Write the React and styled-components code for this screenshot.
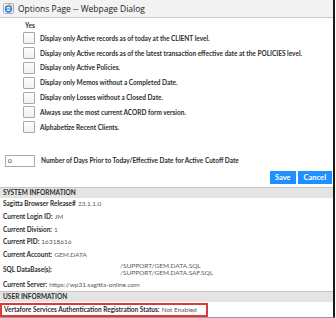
import React from "react";
import styled, { createGlobalStyle } from "styled-components";

const GlobalStyle = createGlobalStyle`
    body {
        margin: 0;
        background: #ffffff;
        font-family: "Lato", "Open Sans", sans-serif;
    }
`;

//Dialog frame
const Window = styled.div`
    width: 333px;
    height: 317px;
    display: flex;
    flex-direction: column;
    border-right: 2px solid #1a1a1a;
    border-bottom: 1px solid #9a9a9a;
    overflow: hidden;
    background: #ffffff;
`;

const TitleBar = styled.div`
    height: 17px;
    flex-shrink: 0;
    display: flex;
    align-items: center;
    gap: 4px;
    padding-left: 3px;
    background: #f3f3f3;
    border-bottom: 1px solid #c9c9c9;
`;

const TitleText = styled.span`
    font-family: "Open Sans", sans-serif;
    font-size: 8.5px;
    color: #222;
`;

const Options = styled.div`
    padding: 2px 0 0 23px;
`;

const YesLabel = styled.div`
    height: 11px;
    line-height: 11px;
    padding-left: 2px;
    font-size: 6.5px;
    font-weight: 700;
    color: #333;
`;

const CheckRow = styled.label`
    height: 14.8px;
    display: flex;
    align-items: center;
    gap: 5px;
    font-size: 6.5px;
    font-weight: 700;
    color: #2e2e2e;
`;

const Box = styled.span`
    width: 10px;
    height: 10px;
    flex-shrink: 0;
    border: 1px solid #a8a8a8;
    border-radius: 1px;
    background: linear-gradient(#fdfdfd, #f1f1f1);
`;

const CutoffRow = styled.div`
    margin-top: 20px;
    padding-left: 5px;
    display: flex;
    align-items: center;
    gap: 6px;
    font-size: 6.5px;
    font-weight: 700;
    color: #2e2e2e;
`;

const DaysInput = styled.div`
    width: 26px;
    height: 10px;
    border: 1px solid #a9a9a9;
    font-size: 6.5px;
    font-weight: 400;
    line-height: 10px;
    padding-left: 2px;
    color: #333;
`;

const ButtonRow = styled.div`
    display: flex;
    justify-content: flex-end;
    gap: 2px;
    padding: 4px 1px 3px 0;
`;

const Button = styled.button`
    height: 13px;
    padding: 0 ${(p) => p.$pad}px;
    border: none;
    background: #1e90ff;
    color: #ffffff;
    font-family: "Lato", sans-serif;
    font-size: 7.5px;
    font-weight: 700;
    line-height: 13px;
`;

const SectionHeader = styled.div`
    height: 10px;
    line-height: 10px;
    padding-left: 3px;
    background: #e4e4e4;
    border-top: 1px solid #c4c4c4;
    font-size: 6.5px;
    font-weight: 700;
    color: #2e2e2e;
`;

const InfoRow = styled.div`
    height: ${(p) => p.$h || 13.5}px;
    display: flex;
    align-items: center;
    padding-left: 3px;
    font-size: 6.5px;
    color: #2e2e2e;
    white-space: nowrap;
`;

const Key = styled.span`
    font-weight: 700;
    margin-right: 2px;
`;

const Value = styled.span`
    color: #5a5a5a;
`;

const SqlKey = styled.span`
    width: 117px;
    font-weight: 700;
`;

const Paths = styled.div`
    display: flex;
    flex-direction: column;
    line-height: 7.5px;
    color: #5a5a5a;
`;

const StatusBox = styled.div`
    margin: 1px 0 0 0;
    width: 202px;
    height: 11px;
    display: flex;
    align-items: center;
    padding-left: 2px;
    border: 2px solid #e0383a;
    font-size: 6.5px;
    color: #2e2e2e;
    white-space: nowrap;
`;

const IEIcon = () => (
    <svg width="11" height="11" viewBox="0 0 11 11">
        <rect x="0.5" y="0.5" width="10" height="10" rx="1" fill="#f4f7fb" stroke="#9bb0c8" />
        <circle cx="5.5" cy="6" r="3" fill="none" stroke="#2a78d0" strokeWidth="1.4" />
        <path d="M3 6 H8" stroke="#2a78d0" strokeWidth="1" />
        <path d="M2 3.5 Q6 0.5 9.5 2.5" fill="none" stroke="#e8a620" strokeWidth="0.9" />
    </svg>
);

const options = [
    "Display only Active records as of today at the CLIENT level.",
    "Display only Active records as of the latest transaction effective date at the POLICIES level.",
    "Display only Active Policies.",
    "Display only Memos without a Completed Date.",
    "Display only Losses without a Closed Date.",
    "Always use the most current ACORD form version.",
    "Alphabetize Recent Clients.",
];

const info = [
    ["Sagitta Browser Release#", "23.1.1.0"],
    ["Current Login ID:", "JM"],
    ["Current Division:", "1"],
    ["Current PID:", "16318616"],
    ["Current Account:", "GEM.DATA"],
];

const App = () => {
    return (
        <>
            <GlobalStyle />
            <Window>
                <TitleBar>
                    <IEIcon />
                    <TitleText>Options Page -- Webpage Dialog</TitleText>
                </TitleBar>
                <Options>
                    <YesLabel>Yes</YesLabel>
                    {options.map((o) => (
                        <CheckRow key={o}>
                            <Box />
                            {o}
                        </CheckRow>
                    ))}
                </Options>
                <CutoffRow>
                    <DaysInput>0</DaysInput>
                    Number of Days Prior to Today/Effective Date for Active Cutoff Date
                </CutoffRow>
                <ButtonRow>
                    <Button $pad={5}>Save</Button>
                    <Button $pad={6}>Cancel</Button>
                </ButtonRow>
                <SectionHeader>SYSTEM INFORMATION</SectionHeader>
                {info.map(([k, v]) => (
                    <InfoRow key={k}>
                        <Key>{k}</Key>
                        <Value>{v}</Value>
                    </InfoRow>
                ))}
                <InfoRow $h={18}>
                    <SqlKey>SQL DataBase(s):</SqlKey>
                    <Paths>
                        <span>/SUPPORT/GEM.DATA.SQL</span>
                        <span>/SUPPORT/GEM.DATA.SAF.SQL</span>
                    </Paths>
                </InfoRow>
                <InfoRow>
                    <Key>Current Server:</Key>
                    <Value>https://wp31.sagitta-online.com</Value>
                </InfoRow>
                <SectionHeader>USER INFORMATION</SectionHeader>
                <StatusBox>
                    <Key>Vertafore Services Authentication Registration Status:</Key>
                    <Value>Not Enabled</Value>
                </StatusBox>
            </Window>
        </>
    );
};

export default App;
